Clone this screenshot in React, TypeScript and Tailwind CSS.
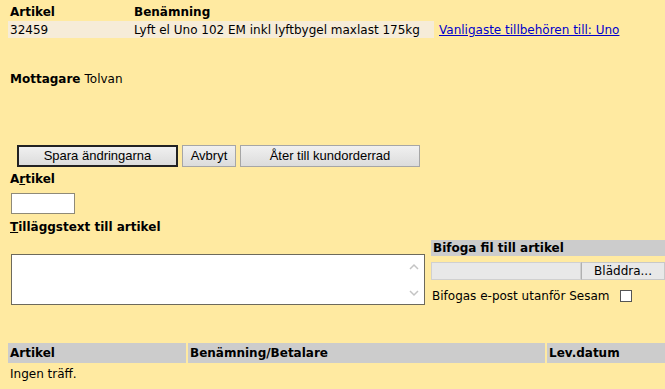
import React from "react";

const font = { fontFamily: '"DejaVu Sans", Tahoma, sans-serif' };

function Btn({ children, w, focused }: { children: React.ReactNode; w: string; focused?: boolean }) {
  return (
    <button
      className={`${w} h-[22px] flex items-center justify-center text-[13px] text-black bg-gradient-to-b from-[#f0f0f0] to-[#dcdcdc] ${
        focused ? "border-2 border-[#222]" : "border border-[#a6a6a6]"
      }`}
      style={{ fontFamily: '"Liberation Sans", Arial, sans-serif' }}
    >
      {children}
    </button>
  );
}

export default function App() {
  return (
    <div className="w-[665px] h-[389px] bg-[#ffeaa1] overflow-hidden text-[12px] leading-[16px] text-black" style={font}>
      {/* top table */}
      <div className="pt-[3px] pl-[8px]">
        <div className="flex h-[17px] items-center font-bold">
          <div className="w-[124px] pl-[2px]">Artikel</div>
          <div className="pl-[2px]">Benämning</div>
        </div>
        <div className="flex h-[17px] items-center mt-[1px]">
          <div className="w-[124px] pl-[2px] h-full flex items-center bg-[#f6ecd8]">32459</div>
          <div className="w-[302px] pl-[2px] h-full flex items-center bg-[#f6ecd8] whitespace-nowrap">Lyft el Uno 102 EM inkl lyftbygel maxlast 175kg</div>
          <a className="ml-[5px] text-[#0000cc] underline whitespace-nowrap" href="#">Vanligaste tillbehören till: Uno</a>
        </div>
      </div>

      <div className="mt-[33px] pl-[10px] h-[16px] flex items-center">
        <span className="font-bold">Mottagare</span>
        <span className="ml-[4px]">Tolvan</span>
      </div>

      {/* buttons */}
      <div className="mt-[58px] pl-[17px] flex gap-[4px]">
        <Btn w="w-[161px]" focused>Spara ändringarna</Btn>
        <Btn w="w-[54px]">Avbryt</Btn>
        <Btn w="w-[180px]">Åter till kundorderrad</Btn>
      </div>

      <div className="pl-[10px] mt-[4px] h-[16px] font-bold flex items-center">
        A<span className="underline">r</span>tikel
      </div>
      <div className="pl-[11px] mt-[6px]">
        <div className="w-[64px] h-[21px] bg-white border border-[#8f8a78]" />
      </div>
      <div className="pl-[10px] mt-[5px] h-[16px] font-bold flex items-center">
        <span className="underline">T</span>illäggstext till artikel
      </div>

      {/* middle */}
      <div className="flex">
        <div className="pl-[11px] pt-[19px]">
          <div className="w-[414px] h-[51px] bg-white border border-[#6d6a5c] relative">
            <svg className="absolute right-[4px] top-[7px]" width="12" height="10" viewBox="0 0 12 10">
              <path d="M2 7 L6 3 L10 7" fill="none" stroke="#c4c4c4" strokeWidth="1.5" />
            </svg>
            <svg className="absolute right-[4px] bottom-[6px]" width="12" height="10" viewBox="0 0 12 10">
              <path d="M2 3 L6 7 L10 3" fill="none" stroke="#c4c4c4" strokeWidth="1.5" />
            </svg>
          </div>
        </div>
        <div className="ml-[6px] pt-[5px] flex-1">
          <div className="h-[16px] bg-[#cccccc] font-bold pl-[2px] flex items-center">Bifoga fil till artikel</div>
          <div className="mt-[6px] flex h-[18px]">
            <div className="w-[150px] bg-[#e8e8e8] border border-[#d0d0d0]" />
            <div className="flex-1 bg-[#e8e8e8] border border-[#c8c8c8] border-l-[#b0b0b0] flex items-center justify-end pr-[12px]">Bläddra...</div>
          </div>
          <div className="mt-[8px] flex items-center h-[16px] pl-[1px]">
            <span className="whitespace-nowrap">Bifogas e-post utanför Sesam</span>
            <span className="ml-[10px] w-[12px] h-[12px] bg-white border border-[#555]" />
          </div>
        </div>
      </div>

      {/* bottom table */}
      <div className="mt-[38px] pl-[8px] flex gap-[2px] h-[20px] font-bold">
        <div className="w-[178px] bg-[#cccccc] pl-[2px] flex items-center">Artikel</div>
        <div className="w-[357px] bg-[#cccccc] pl-[2px] flex items-center">Benämning/Betalare</div>
        <div className="flex-1 bg-[#cccccc] pl-[2px] flex items-center">Lev.datum</div>
      </div>
      <div className="pl-[10px] mt-[3px] h-[16px] flex items-center">Ingen träff.</div>
    </div>
  );
}
